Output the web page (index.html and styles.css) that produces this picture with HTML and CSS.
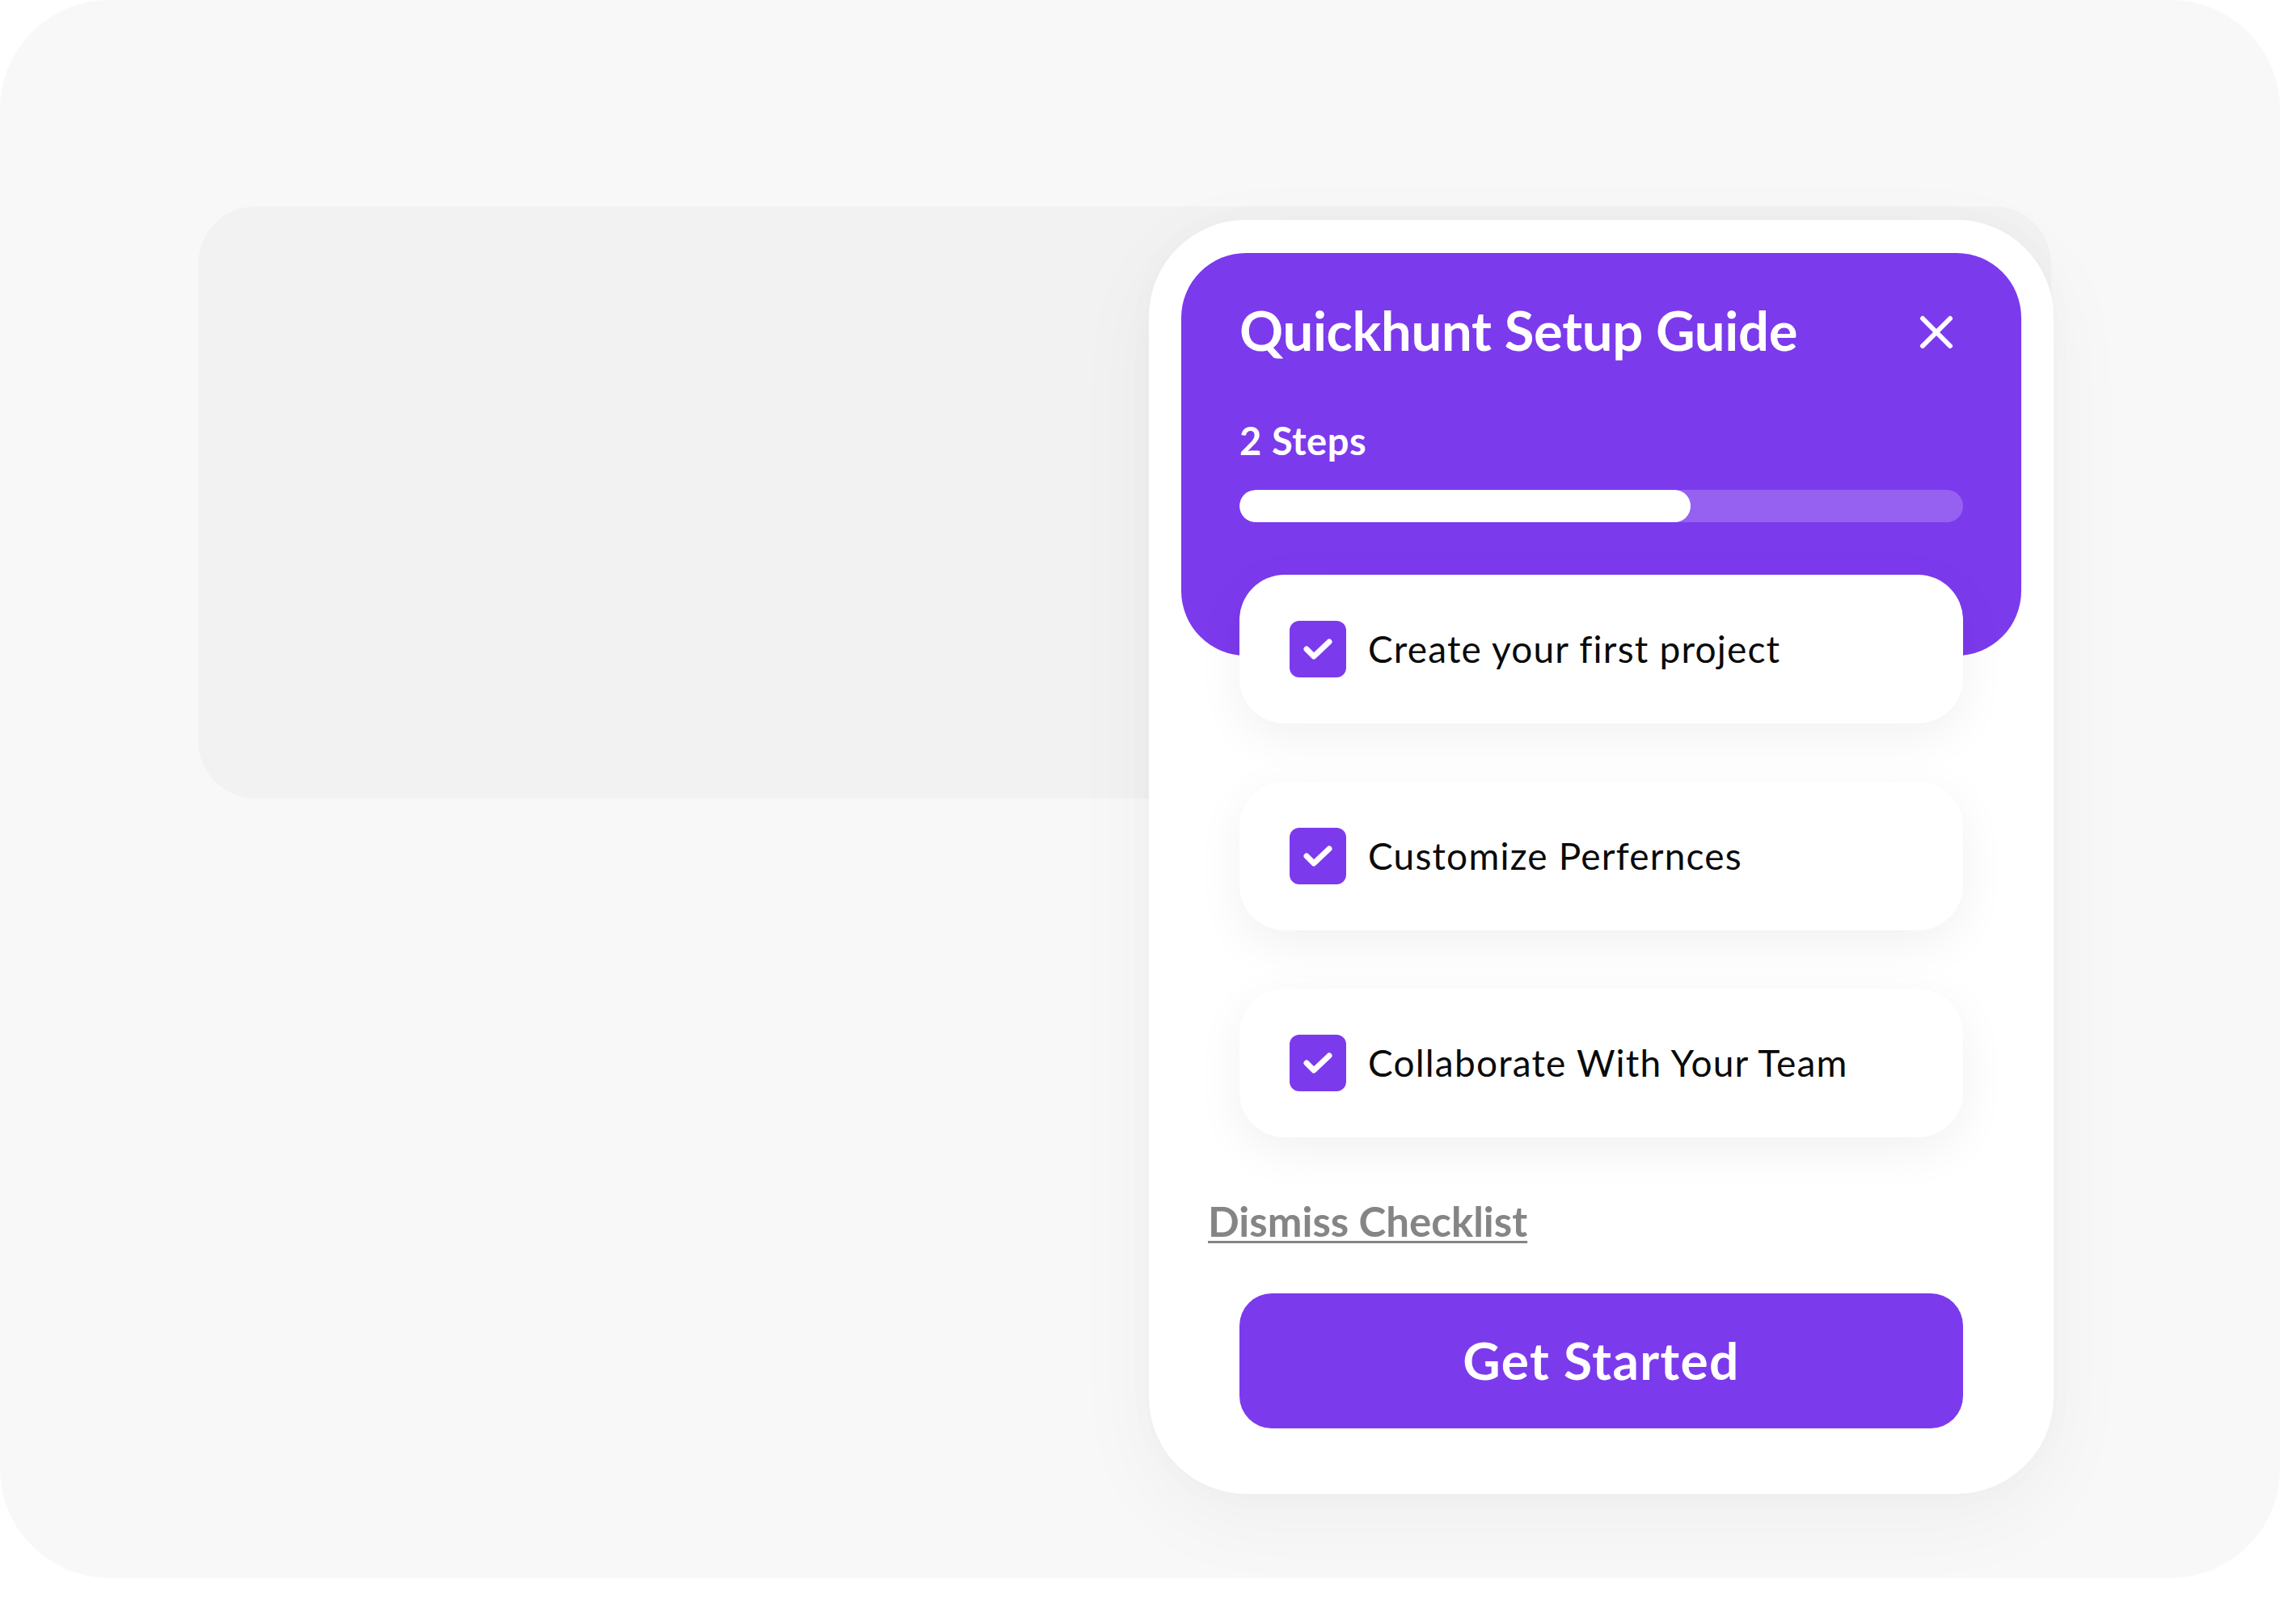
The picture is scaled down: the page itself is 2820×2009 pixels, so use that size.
FILE: index.html
```html
<!DOCTYPE html>
<html lang="en">
<head>
<meta charset="utf-8">
<title>Quickhunt Setup Guide</title>
<link rel="stylesheet" href="styles.css">
</head>
<body>
<div class="canvas">
  <div class="panel"></div>

  <div class="widget">
    <div class="widget-head">
      <div class="title-row">
        <h1 class="title">Quickhunt Setup Guide</h1>
        <button class="close" aria-label="Close">
          <svg width="42" height="42" viewBox="0 0 42 42"><path d="M4 4 L38 38 M38 4 L4 38" stroke="#fff" stroke-width="6" stroke-linecap="round" fill="none"/></svg>
        </button>
      </div>
      <div class="steps">2 Steps</div>
      <div class="progress"><div class="progress-fill" style="width:62.4%"></div></div>
    </div>

    <ul class="checklist">
      <li class="item">
        <span class="check"><svg width="70" height="70" viewBox="0 0 70 70"><path d="M21 35 L30 44 L49 26" stroke="#fff" stroke-width="7" stroke-linecap="round" stroke-linejoin="round" fill="none"/></svg></span>
        <span class="item-text">Create your first project</span>
      </li>
      <li class="item">
        <span class="check"><svg width="70" height="70" viewBox="0 0 70 70"><path d="M21 35 L30 44 L49 26" stroke="#fff" stroke-width="7" stroke-linecap="round" stroke-linejoin="round" fill="none"/></svg></span>
        <span class="item-text">Customize Perfernces</span>
      </li>
      <li class="item">
        <span class="check"><svg width="70" height="70" viewBox="0 0 70 70"><path d="M21 35 L30 44 L49 26" stroke="#fff" stroke-width="7" stroke-linecap="round" stroke-linejoin="round" fill="none"/></svg></span>
        <span class="item-text">Collaborate With Your Team</span>
      </li>
    </ul>

    <a class="dismiss" href="#">Dismiss Checklist</a>

    <button class="cta">Get Started</button>
  </div>
</div>
</body>
</html>
```

FILE: styles.css
```css
* { box-sizing: border-box; }

html, body {
  margin: 0;
  padding: 0;
  background: #ffffff;
}

body {
  font-family: "Lato", "Open Sans", "Noto Sans", sans-serif;
  width: 2820px;
  height: 2009px;
}

.canvas {
  position: relative;
  width: 2820px;
  height: 1952px;
  background: #f8f8f8;
  border-radius: 135px;
  padding: 255px 283px 0 245px;
}

.panel {
  height: 733px;
  background: #f2f2f2;
  border-radius: 72px;
}

.widget {
  position: absolute;
  left: 1421px;
  top: 272px;
  width: 1119px;
  background: #ffffff;
  border-radius: 120px;
  padding: 41px 40px 81px 40px;
  display: flex;
  flex-direction: column;
  box-shadow: 0 30px 110px rgba(0, 0, 0, 0.045), 0 0 40px rgba(0, 0, 0, 0.02);
}

.widget-head {
  height: 498px;
  background: #7c3aed;
  border-radius: 80px;
  padding: 55px 72px 0 72px;
  color: #ffffff;
}

.title-row {
  display: flex;
  align-items: center;
  justify-content: space-between;
}

.title {
  margin: 0;
  font-size: 67px;
  font-weight: 700;
  line-height: 1.2;
  letter-spacing: -0.3px;
}

.close {
  border: 0;
  background: none;
  padding: 0;
  margin: 6px 12px 0 0;
  width: 42px;
  height: 42px;
  display: flex;
  cursor: pointer;
}

.steps {
  margin-top: 69px;
  font-size: 47px;
  font-weight: 700;
  line-height: 1.2;
  letter-spacing: 0.6px;
}

.progress {
  margin-top: 32px;
  height: 40px;
  border-radius: 20px;
  background: rgba(255, 255, 255, 0.2);
  overflow: hidden;
}

.progress-fill {
  height: 100%;
  background: #ffffff;
  border-radius: 20px;
}

.checklist {
  position: relative;
  list-style: none;
  margin: -100px 72px 0 72px;
  padding: 0;
  display: flex;
  flex-direction: column;
  gap: 72px;
}

.item {
  height: 184px;
  background: #ffffff;
  border-radius: 56px;
  padding: 0 62px;
  display: flex;
  align-items: center;
  gap: 27px;
  box-shadow: 0 16px 60px rgba(0, 0, 0, 0.06);
}

.check {
  width: 70px;
  height: 70px;
  flex: none;
  background: #7c3aed;
  border-radius: 12px;
  display: flex;
}

.item-text {
  font-size: 46px;
  font-weight: 400;
  line-height: 1.2;
  letter-spacing: 1.2px;
  color: #0a0a0a;
}

.dismiss {
  align-self: flex-start;
  margin: 73px 0 0 33px;
  font-size: 51px;
  font-weight: 700;
  line-height: 1.2;
  color: #858585;
  text-decoration: underline;
  text-decoration-thickness: 3px;
  text-underline-offset: 5px;
}

.cta {
  margin: 59px 72px 0 72px;
  height: 167px;
  border: 0;
  border-radius: 40px;
  background: #7c3aed;
  color: #ffffff;
  font-family: "Lato", "Open Sans", "Noto Sans", sans-serif;
  font-size: 64px;
  font-weight: 700;
  line-height: 1.2;
  letter-spacing: 1.4px;
  cursor: pointer;
}
```
